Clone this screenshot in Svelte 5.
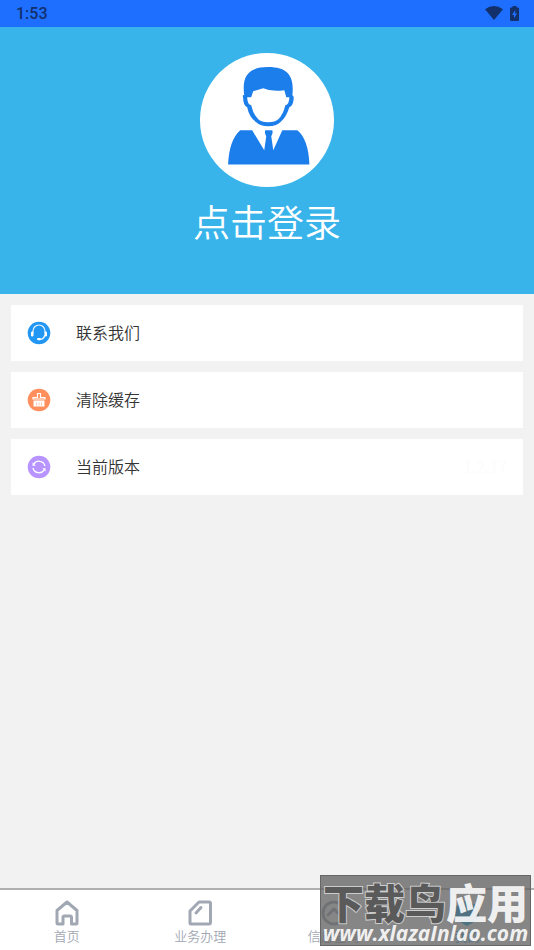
<script>
  const items = [
    { icon: "service", label: "联系我们", value: "" },
    { icon: "clean", label: "清除缓存", value: "" },
    { icon: "version", label: "当前版本", value: "1.2.17" }
  ];

  const tabs = [
    { icon: "home", label: "首页" },
    { icon: "business", label: "业务办理" },
    { icon: "query", label: "信息查询" },
    { icon: "mine", label: "我的" }
  ];

  let active = $state("mine");
</script>

<div class="page">
  <div class="status">
    <span>1:53</span>
    <div class="status-icons">
      <svg width="18" height="14" viewBox="0 0 18 14"><path d="M0 3.2Q9-3.2 18 3.2L9 14z" /></svg>
      <svg width="9" height="15" viewBox="0 0 9 15">
        <path d="M2.5 0h4v1.5H8q1 0 1 1V14q0 1-1 1H1q-1 0-1-1V2.500q0-1 1-1h1.500z" />
        <path class="bolt" d="M5.200 4L2 9h2v3.500L7 7.500H5.200z" />
      </svg>
    </div>
  </div>

  <header>
    <button class="login">
      <span class="avatar">
        <svg viewBox="0 0 133 133">
          <path fill-rule="evenodd" d="M44 42C42 25 46 14 68 14C89 14 94 25 92 42Q94 42 93 48Q92 53 89 54Q86 64 80 69Q76 73 68 73Q60 73 56 69Q49 64 47 54Q43 52 43 45Q42 41 44 42zM51 44H47Q47 51 51 52Q53 61 58 66Q61 69 68 69Q75 69 78 66Q83 61 85 52Q89 51 89 44H86L84 37Q72 39 63 35L53 38z" />
          <path d="M40 77H52L64 97L66 83Q64 80 65 77H72Q73 80 71 83L73 97L82 77H97Q108 86 109 111H28Q29 87 40 77z" />
        </svg>
      </span>
      <span class="name">点击登录</span>
    </button>
  </header>

  <main>
    {#each items as item}
      <button class="card">
        <svg width="24" height="24" viewBox="0 0 24 24">
          {#if item.icon === "service"}
            <circle cx="12" cy="12" r="11.300" fill="#2196f3" />
            <path d="M6 12V10a6 6 0 0 1 12 0v2M18 14q-1 4-5 4.500" fill="none" stroke="#e8f5ff" stroke-width="1.200" />
            <rect x="4" y="10.500" width="2.500" height="5" rx="1.200" fill="#fff" />
            <rect x="17.500" y="10.500" width="2.500" height="5" rx="1.200" fill="#fff" />
            <rect x="10" y="17" width="4" height="2.200" rx="1.100" fill="#fff" />
          {:else if item.icon === "clean"}
            <circle cx="12" cy="12" r="11.300" fill="#ff8f5c" />
            <path d="M6 11V9.500h4.500V5.500h3v4H18V11z" fill="none" stroke="#fff" stroke-width="1.200" />
            <path d="M6.500 12.500h11V18.500h-11z" fill="#fff" />
            <path d="M9.500 14.500v3M12 14.500v3M14.500 14.500v3" stroke="#ffb895" stroke-width="0.800" />
          {:else}
            <circle cx="12" cy="12" r="11.300" fill="#b794ff" />
            <path d="M6.500 9.500A6.200 6.200 0 0 1 18 11M17.500 14.500A6.200 6.200 0 0 1 6 13" fill="none" stroke="#fff" stroke-width="1.300" />
            <path d="M5.500 7.500v3.200h3.200zM18.500 16.500v-3.200h-3.200z" fill="#fff" />
          {/if}
        </svg>
        <span class="label">{item.label}</span>
        <span class="value">{item.value}</span>
      </button>
    {/each}
  </main>

  <nav>
    {#each tabs as tab}
      <button class="tab" class:active={active === tab.icon} onclick={() => (active = tab.icon)}>
        <svg width="26" height="26" viewBox="0 0 26 26">
          {#if tab.icon === "home"}
            <path d="M3 10.500L13 2l10 8.500V23q0 1-1 1h-4.500v-6.500q0-1.500-1.500-1.500h-5.500q-1.500 0-1.500 1.500V24H4q-1 0-1-1z" />
          {:else if tab.icon === "business"}
            <path d="M3 11L12 2h10q1.500 0 1.500 1.500v19q0 1.500-1.500 1.500H4q-1 0-1-1zM9 13l5-5.500" />
          {:else if tab.icon === "query"}
            <circle cx="13" cy="13" r="11" />
            <path d="M7 15l6-6 6 6" />
          {:else}
            <path class="solid" d="M13 0l12 7v12l-12 7-12-7V7z" />
          {/if}
        </svg>
        <span>{tab.label}</span>
      </button>
    {/each}
  </nav>

  <div class="watermark">
    <div class="mark-title"><span>下载鸟</span><b>应用</b></div>
    <div class="mark-url">www.xlazaInlao.com</div>
  </div>
</div>

<style>
  :global(body) {
    background: #f2f2f2;
  }

  .page {
    position: relative;
    display: flex;
    flex-direction: column;
    min-height: 100vh;
    overflow: hidden;
    font-family: "Noto Sans CJK SC", sans-serif;
  }

  button {
    border: 0;
    padding: 0;
    background: none;
    font-family: inherit;
    cursor: pointer;
  }

  svg {
    display: block;
    flex-shrink: 0;
  }

  .status {
    display: flex;
    align-items: center;
    justify-content: space-between;
    height: 27px;
    padding: 0 15px 0 16px;
    box-sizing: border-box;
    background: #1e6fff;
    color: #12306c;
    font: 500 16px/27px Roboto, sans-serif;
  }

  .status-icons {
    display: flex;
    align-items: center;
    gap: 7px;
    padding-bottom: 1px;
    fill: #12306c;
  }

  .bolt {
    fill: #1e6fff;
  }

  header {
    display: flex;
    justify-content: center;
    align-items: flex-start;
    height: 50vw;
    padding-top: 26px;
    box-sizing: border-box;
    background: #38b4eb;
  }

  .login {
    display: flex;
    flex-direction: column;
    align-items: center;
    gap: 8px;
  }

  .avatar {
    width: 25vw;
    height: 25vw;
    border-radius: 50%;
    background: #fff;
    fill: #1c7eeb;
  }

  .name {
    color: #fff;
    font-size: 37px;
    line-height: 52px;
    font-weight: 350;
  }

  main {
    display: flex;
    flex-direction: column;
    flex: 1;
    gap: 11px;
    padding: 11px;
  }

  .card {
    display: flex;
    align-items: center;
    height: 56px;
    padding: 0 16px;
    background: #fff;
    color: #333;
    font-size: 16px;
  }

  .label,
  .value {
    padding-bottom: 2px;
    font-weight: 350;
  }

  .label {
    margin-left: 25px;
  }

  .value {
    margin-left: auto;
    color: #fcfcfc;
  }

  nav {
    display: flex;
    height: 62px;
    border-top: 2px solid #b0b0b0;
    box-sizing: border-box;
    background: #fff;
  }

  .tab {
    display: flex;
    flex: 1;
    flex-direction: column;
    align-items: center;
    padding-top: 10px;
    color: #a2a8b3;
    font-size: 13px;
    font-weight: 350;
    line-height: 20px;
  }

  .tab svg {
    fill: none;
    stroke: currentColor;
    stroke-width: 3;
    stroke-linecap: round;
    stroke-linejoin: round;
  }

  .tab.active {
    color: #1fa8ea;
  }

  .tab .solid {
    fill: currentColor;
    stroke: none;
  }

  .watermark {
    position: absolute;
    right: 3px;
    bottom: 4px;
    width: 211px;
    height: 71px;
    box-sizing: border-box;
    border: 1px solid #666;
    background: rgba(96, 96, 96, 0.76);
    color: rgba(255, 255, 255, 0.9);
    text-align: center;
    white-space: nowrap;
    pointer-events: none;
  }

  .mark-title {
    font-size: 41px;
    line-height: 46px;
    margin-top: 2px;
    font-weight: 900;
  }

  .mark-title span {
    color: #5a5a5a;
    -webkit-text-stroke: 2px #ccc;
    paint-order: stroke fill;
  }

  .mark-title b {
    font-weight: 900;
  }

  .mark-url {
    font: italic 700 21px/18px "Open Sans", sans-serif;
  }
</style>
